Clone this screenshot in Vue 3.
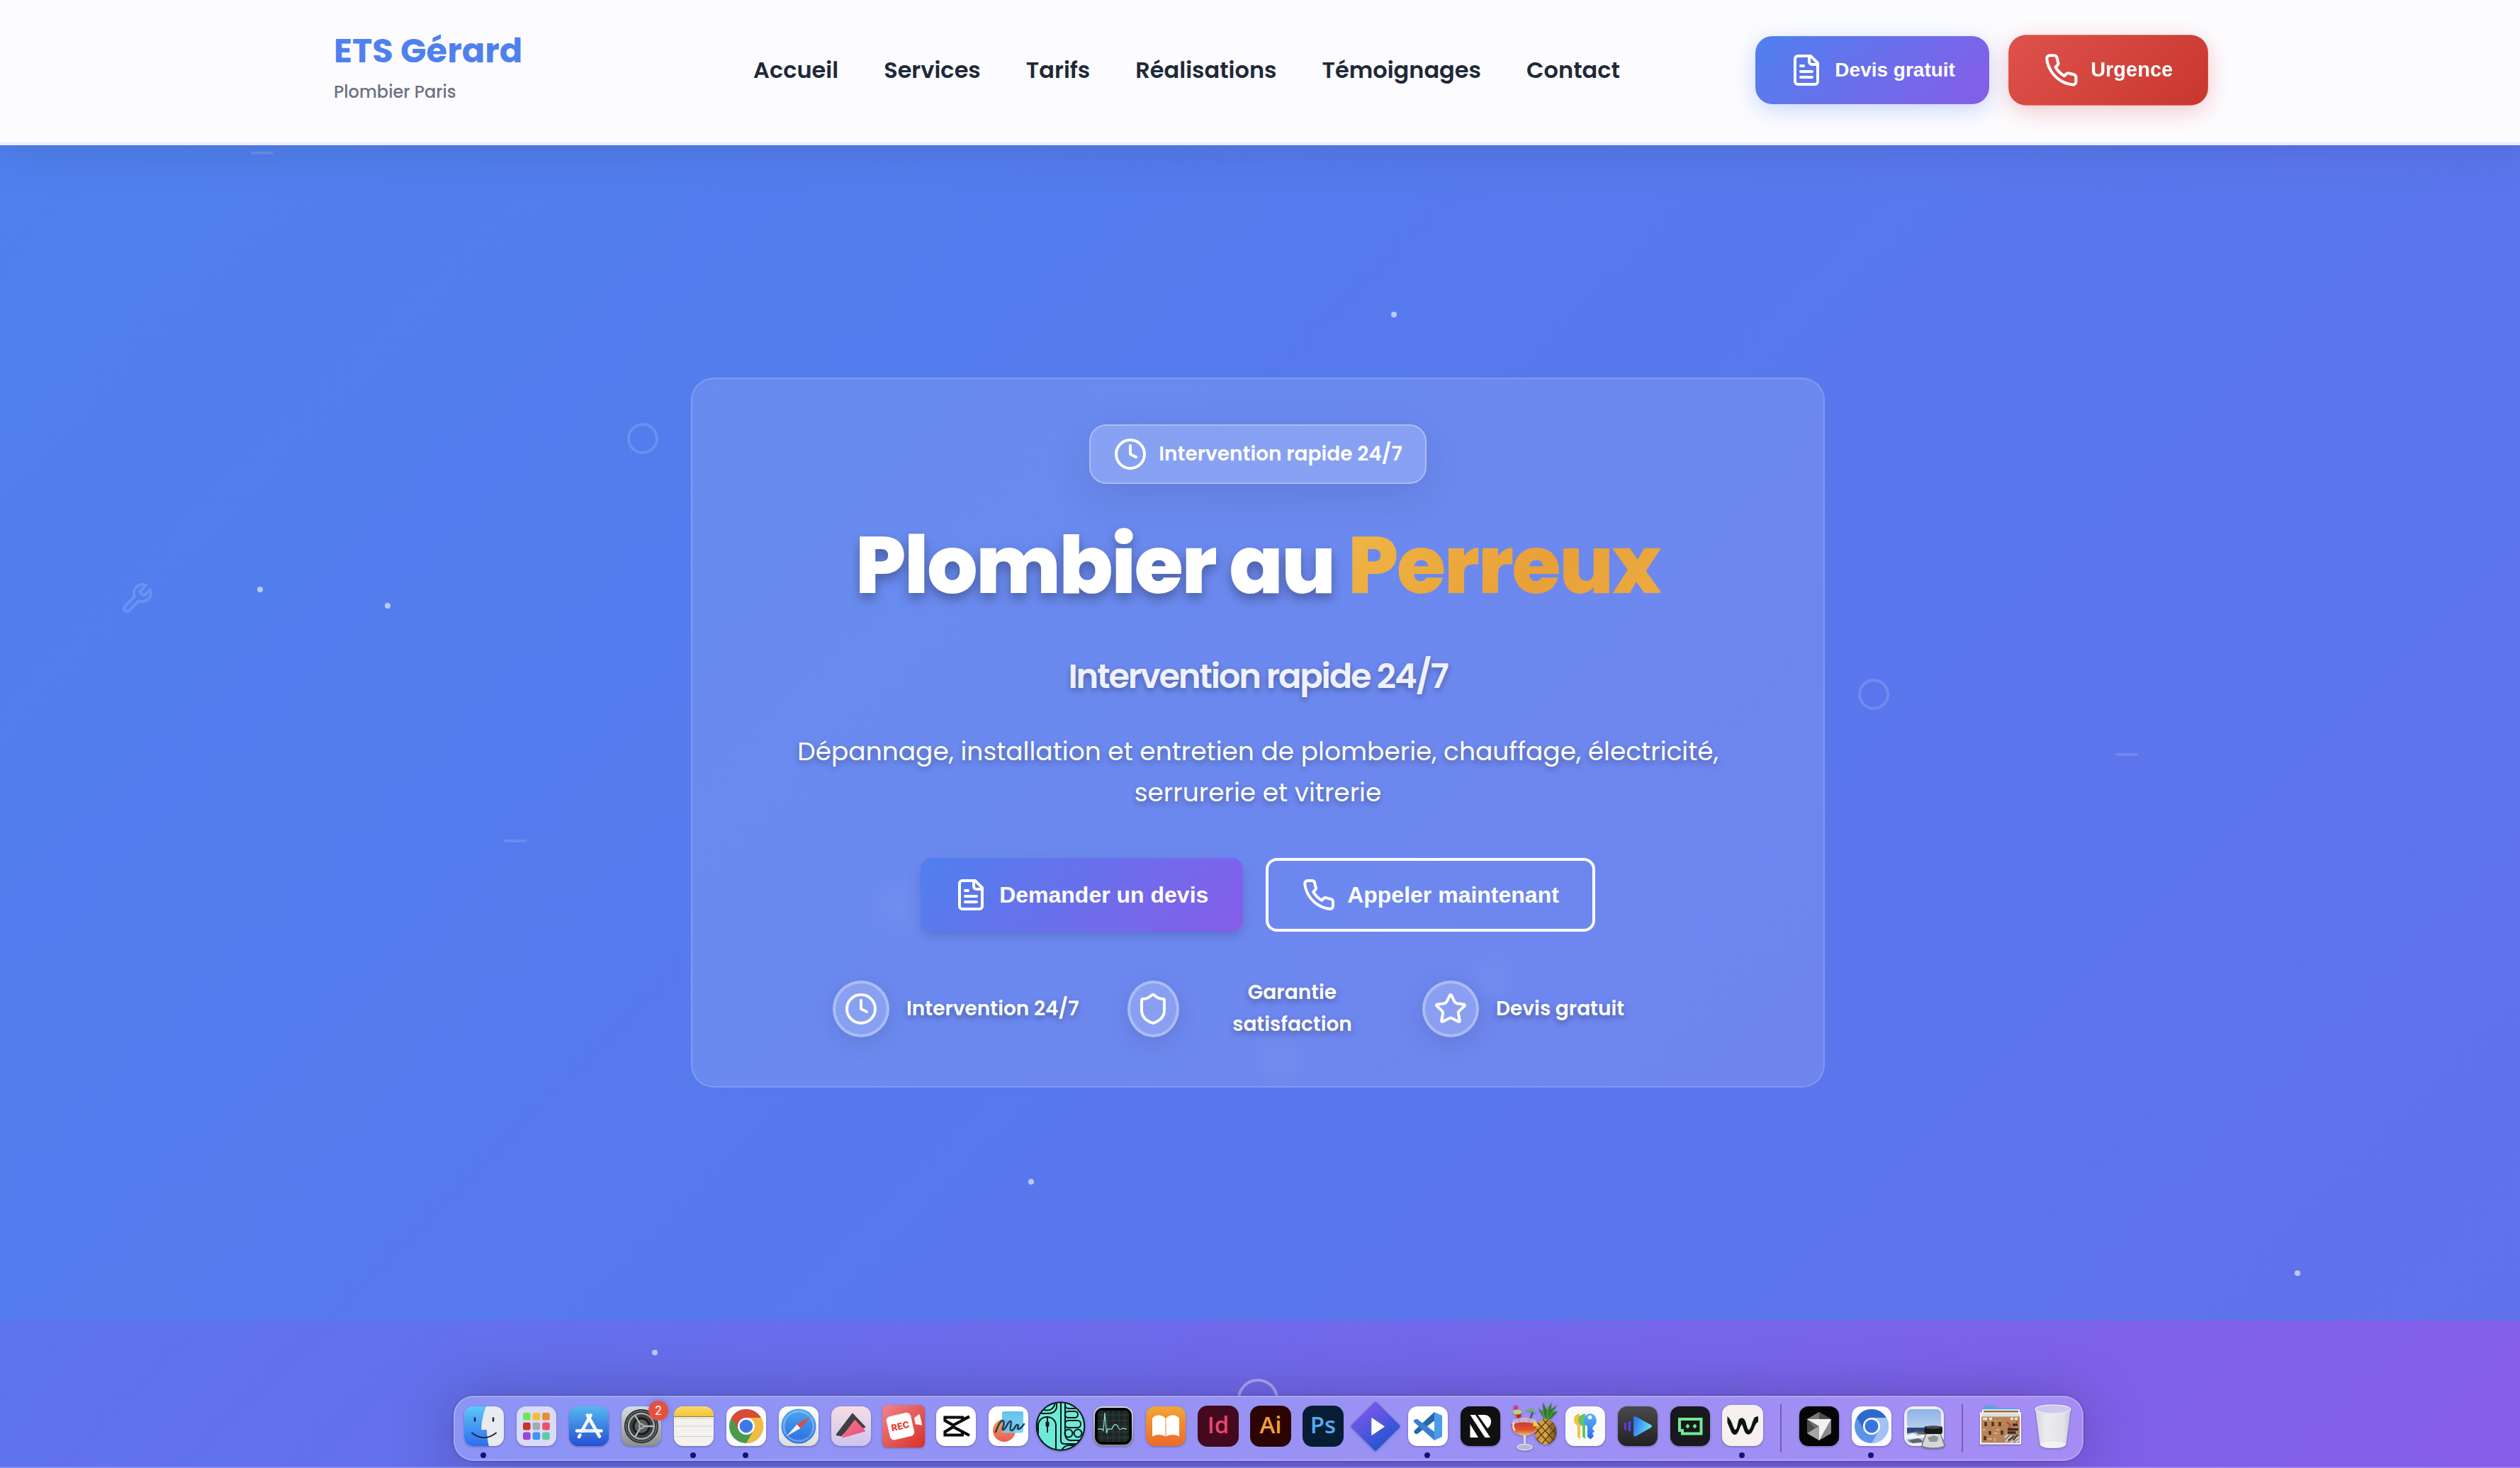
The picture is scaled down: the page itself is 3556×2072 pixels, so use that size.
<script setup>
const nav = ['Accueil', 'Services', 'Tarifs', 'Réalisations', 'Témoignages', 'Contact']

const icons = {
  file: ['M15 2H6a2 2 0 0 0-2 2v16a2 2 0 0 0 2 2h12a2 2 0 0 0 2-2V7Z', 'M14 2v4a2 2 0 0 0 2 2h4', 'M10 9H8', 'M16 13H8', 'M16 17H8'],
  phone: ['M22 16.92v3a2 2 0 0 1-2.18 2 19.79 19.79 0 0 1-8.63-3.07 19.5 19.5 0 0 1-6-6 19.79 19.79 0 0 1-3.07-8.67A2 2 0 0 1 4.11 2h3a2 2 0 0 1 2 1.72 12.84 12.84 0 0 0 .7 2.81 2 2 0 0 1-.45 2.11L8.09 9.91a16 16 0 0 0 6 6l1.27-1.27a2 2 0 0 1 2.11-.45 12.84 12.84 0 0 0 2.81.7A2 2 0 0 1 22 16.92z'],
  clock: ['M12 2a10 10 0 1 0 0 20a10 10 0 1 0 0-20', 'M12 6v6l4 2'],
  shield: ['M20 13c0 5-3.5 7.5-7.66 8.95a1 1 0 0 1-.67-.01C7.5 20.5 4 18 4 13V6a1 1 0 0 1 1-1c2 0 4.5-1.2 6.24-2.72a1.17 1.17 0 0 1 1.52 0C14.51 3.81 17 5 19 5a1 1 0 0 1 1 1z'],
  star: ['M11.525 2.295a.53.53 0 0 1 .95 0l2.31 4.679a2.123 2.123 0 0 0 1.595 1.16l5.166.756a.53.53 0 0 1 .294.904l-3.736 3.638a2.123 2.123 0 0 0-.611 1.878l.882 5.14a.53.53 0 0 1-.771.56l-4.618-2.428a2.122 2.122 0 0 0-1.973 0L6.396 21.01a.53.53 0 0 1-.77-.56l.881-5.139a2.122 2.122 0 0 0-.611-1.879L2.16 9.795a.53.53 0 0 1 .294-.906l5.165-.755a2.122 2.122 0 0 0 1.597-1.16z'],
  wrench: ['M14.7 6.3a1 1 0 0 0 0 1.4l1.6 1.6a1 1 0 0 0 1.4 0l3.77-3.77a6 6 0 0 1-7.94 7.94l-6.91 6.91a2.12 2.12 0 0 1-3-3l6.91-6.91a6 6 0 0 1 7.94-7.94l-3.76 3.76z']
}

const features = [
  { icon: 'clock', text: 'Intervention 24/7' },
  { icon: 'shield', text: 'Garantie satisfaction' },
  { icon: 'star', text: 'Devis gratuit' }
]

const particles = [[367, 832], [547, 855], [1967, 444], [1455, 1668], [3242, 1797], [924, 1909]]
const halos = [[1266, 1278], [2108, 1380], [1806, 1496]]
const rings = [[907, 619], [2644, 980]]
const dashes = [[370, 216], [3001, 1065], [727, 1187]]
const at = ([x, y]) => ({ left: x + 'px', top: y + 'px' })

const launchColors = ['#6fe552', '#f5bd38', '#ea8a33', '#cc3325', '#a3aab0', '#ee4f66', '#9a47d3', '#3f93f5', '#5fc9a6']
const ticks = Array.from({ length: 60 }, (_, i) => i * 6)
const gridLines = [10, 18, 26, 34, 42]
</script>

<template>
  <div class="page">
    <header class="header">
      <div class="logo">
        <span class="logo-name">ETS Gérard</span>
        <span class="logo-sub">Plombier Paris</span>
      </div>
      <nav class="nav">
        <a v-for="n in nav" :key="n">{{ n }}</a>
      </nav>
      <div class="actions">
        <button class="btn btn-quote">
          <svg class="ico" viewBox="0 0 24 24"><path v-for="d in icons.file" :key="d" :d="d" /></svg>
          <span>Devis gratuit</span>
        </button>
        <button class="btn btn-urgent">
          <svg class="ico" viewBox="0 0 24 24"><path v-for="d in icons.phone" :key="d" :d="d" /></svg>
          <span>Urgence</span>
        </button>
      </div>
    </header>

    <main class="hero">
      <section class="card">
        <div class="badge">
          <svg class="ico" viewBox="0 0 24 24"><path v-for="d in icons.clock" :key="d" :d="d" /></svg>
          <span>Intervention rapide 24/7</span>
        </div>
        <h1>Plombier au <span class="accent">Perreux</span></h1>
        <h2>Intervention rapide 24/7</h2>
        <p>Dépannage, installation et entretien de plomberie, chauffage, électricité, serrurerie et vitrerie</p>
        <div class="cta">
          <button class="cta-btn primary">
            <svg class="ico" viewBox="0 0 24 24"><path v-for="d in icons.file" :key="d" :d="d" /></svg>
            <span>Demander un devis</span>
          </button>
          <button class="cta-btn outline">
            <svg class="ico" viewBox="0 0 24 24"><path v-for="d in icons.phone" :key="d" :d="d" /></svg>
            <span>Appeler maintenant</span>
          </button>
        </div>
        <div class="features">
          <div v-for="f in features" :key="f.text" class="feature">
            <div class="disc">
              <svg class="ico" viewBox="0 0 24 24"><path v-for="d in icons[f.icon]" :key="d" :d="d" /></svg>
            </div>
            <span>{{ f.text }}</span>
          </div>
        </div>
      </section>
    </main>
    <div class="band"></div>

    <div class="decor">
      <i v-for="p in halos" :key="p[0]" class="halo" :style="at(p)"></i>
      <i v-for="p in particles" :key="p[0]" class="dot" :style="at(p)"></i>
      <i v-for="p in rings" :key="p[0]" class="ring" :style="at(p)"></i>
      <i v-for="p in dashes" :key="p[0]" class="dash" :style="at(p)"></i>
      <svg class="ico wrench" viewBox="0 0 24 24"><path :d="icons.wrench[0]" /></svg>
      <i class="scroll"></i>
    </div>

    <svg class="defs" width="0" height="0">
      <defs>
        <linearGradient id="gFinder" x2="0" y2="1"><stop offset="0" stop-color="#5cc8f8" /><stop offset="1" stop-color="#2f6cee" /></linearGradient>
        <linearGradient id="gStore" x2="0" y2="1"><stop offset="0" stop-color="#55b8f0" /><stop offset="1" stop-color="#2450d2" /></linearGradient>
        <linearGradient id="gGrey" x2="0" y2="1"><stop offset="0" stop-color="#d3dde4" /><stop offset="1" stop-color="#8d8d8b" /></linearGradient>
        <linearGradient id="gPaper" x2="0" y2="1"><stop offset="0" stop-color="#ffffff" /><stop offset="1" stop-color="#dededa" /></linearGradient>
        <linearGradient id="gNote" x2="0" y2="1"><stop offset="0" stop-color="#f9d96a" /><stop offset="1" stop-color="#f5c433" /></linearGradient>
        <linearGradient id="gSafari" x2="0" y2="1"><stop offset="0" stop-color="#4ba5f0" /><stop offset="1" stop-color="#2c6ee0" /></linearGradient>
        <linearGradient id="gPink" x2="0" y2="1"><stop offset="0" stop-color="#f6dde2" /><stop offset="1" stop-color="#cdc5ee" /></linearGradient>
        <linearGradient id="gTri" x2="1" y2="1"><stop offset="0" stop-color="#f07a72" /><stop offset="1" stop-color="#ee4a90" /></linearGradient>
        <linearGradient id="gRec" x2="1" y2="1"><stop offset="0" stop-color="#f0858a" /><stop offset="1" stop-color="#d92f25" /></linearGradient>
        <linearGradient id="gFree" x2="0" y2="1"><stop offset="0" stop-color="#f3a83c" /><stop offset="1" stop-color="#ea5a64" /></linearGradient>
        <linearGradient id="gFree2" x2="0" y2="1"><stop offset="0" stop-color="#4fb9ea" /><stop offset="1" stop-color="#74cdf5" /></linearGradient>
        <linearGradient id="gBook" x2="0" y2="1"><stop offset="0" stop-color="#f2a638" /><stop offset="1" stop-color="#ec6a2a" /></linearGradient>
        <linearGradient id="gDiamond" x2="0.6" y2="1"><stop offset="0" stop-color="#8b58ee" /><stop offset="1" stop-color="#2355d0" /></linearGradient>
        <linearGradient id="gPlay" x2="1" y2="0.3"><stop offset="0" stop-color="#2f74f0" /><stop offset="1" stop-color="#5fd8f2" /></linearGradient>
        <linearGradient id="gDark" x2="0" y2="1"><stop offset="0" stop-color="#4a4a4c" /><stop offset="1" stop-color="#222224" /></linearGradient>
        <linearGradient id="gKey" x2="0" y2="1"><stop offset="0" stop-color="#58b4f5" /><stop offset="1" stop-color="#2b6cf0" /></linearGradient>
        <linearGradient id="gPine" x2="1" y2="0"><stop offset="0" stop-color="#c58e38" /><stop offset=".5" stop-color="#d9a548" /><stop offset="1" stop-color="#6b4617" /></linearGradient>
        <linearGradient id="gDrink" x2="0" y2="1"><stop offset="0" stop-color="#c53a34" /><stop offset=".6" stop-color="#e2572c" /><stop offset="1" stop-color="#e9c06a" /></linearGradient>
        <linearGradient id="gSky" x2="0" y2="1"><stop offset="0" stop-color="#8db3ea" /><stop offset="1" stop-color="#b5cdee" /></linearGradient>
        <linearGradient id="gTrash" x2="1" y2="0"><stop offset="0" stop-color="#d4d5dc" /><stop offset=".3" stop-color="#ececee" /><stop offset=".8" stop-color="#e2e3e7" /><stop offset="1" stop-color="#c6c6d0" /></linearGradient>
        <clipPath id="tileClip"><rect width="56" height="56" rx="13" /></clipPath>
        <clipPath id="roundClip"><circle cx="27.500" cy="28" r="33" /></clipPath>
        <clipPath id="pineClip"><ellipse cx="46" cy="36" rx="15.500" ry="18" /></clipPath>
      </defs>
    </svg>

    <div class="dock">
      <!-- Finder -->
      <div class="app running">
        <svg viewBox="0 0 56 56">
          <g clip-path="url(#tileClip)">
            <rect width="56" height="56" fill="#e9ebf0" />
            <path d="M0 0H31C27 10 24.500 21 24 33H32C32 41 33 49 35 56H0Z" fill="url(#gFinder)" />
          </g>
          <path d="M15 16.500v4M41 16.500v4" stroke="#1d2a3c" stroke-width="2.600" stroke-linecap="round" />
          <path d="M11 37.500Q28 51 45 37.500" fill="none" stroke="#1a2434" stroke-width="2" stroke-linecap="round" />
        </svg>
      </div>
      <!-- Launchpad -->
      <div class="app">
        <svg viewBox="0 0 56 56">
          <rect width="56" height="56" rx="13" fill="#d9dcf8" />
          <rect v-for="(c, i) in launchColors" :key="c" :x="9 + (i % 3) * 13.600" :y="9 + Math.floor(i / 3) * 13.800" width="10.600" height="10.600" rx="2.600" :fill="c" />
        </svg>
      </div>
      <!-- App Store -->
      <div class="app">
        <svg viewBox="0 0 56 56">
          <rect width="56" height="56" rx="13" fill="url(#gStore)" />
          <path d="M30.500 12.500L18 35M26 12.500L43 42.500M11 34.500H23M32 34.500H45.500M15.500 40.500L14 43" stroke="#fff" stroke-width="4.600" stroke-linecap="round" fill="none" />
          <path d="M18 34.500H34" stroke="#e4eefc" stroke-width="4.600" />
        </svg>
      </div>
      <!-- System settings -->
      <div class="app">
        <svg viewBox="0 0 56 56">
          <rect width="56" height="56" rx="13" fill="url(#gGrey)" />
          <circle cx="28" cy="28" r="24" fill="#1f2122" />
          <circle cx="28" cy="28" r="21.500" fill="none" stroke="#9a9fa2" stroke-width="2" stroke-dasharray="1.300 1" />
          <circle cx="28" cy="28" r="18" fill="#3a3c3d" stroke="#a4a9ab" stroke-width="2.600" />
          <circle cx="28" cy="28" r="11" fill="#5c5f60" stroke="#1a1b1c" stroke-width="3" />
          <path d="M28 28H46M28 28L19 12.500M28 28L19 43.500" stroke="#b5babc" stroke-width="2.400" />
          <circle cx="28" cy="28" r="3.200" fill="#6f7375" stroke="#b5babc" stroke-width="1.400" />
        </svg>
        <span class="count">2</span>
      </div>
      <!-- Notes -->
      <div class="app running">
        <svg viewBox="0 0 56 56">
          <g clip-path="url(#tileClip)">
            <rect width="56" height="56" fill="#f3f2ef" />
            <rect width="56" height="14" fill="url(#gNote)" />
            <path d="M0 14.500H56" stroke="#8d7a3e" stroke-width="1" />
            <path d="M1 17H56" stroke="#c9c8c3" stroke-width="2" stroke-dasharray="1 1.500" />
            <path d="M0 28H56M0 42.500H56" stroke="#d3d2ce" stroke-width="1.200" />
          </g>
        </svg>
      </div>
      <!-- Chrome -->
      <div class="app running">
        <svg viewBox="0 0 56 56">
          <rect width="56" height="56" rx="13" fill="#fafaff" />
          <circle cx="28" cy="28" r="24" fill="#4a9a50" />
          <path d="M28 16H48.800A24 24 0 0 1 28 52L38.400 34Z" fill="#f2bb42" />
          <path d="M7.200 16A24 24 0 0 1 48.800 16H28A12 12 0 0 0 17.600 34Z" fill="#d64b38" />
          <circle cx="28" cy="28" r="12" fill="#fff" />
          <circle cx="28" cy="28" r="9.300" fill="#3f78e6" />
        </svg>
      </div>
      <!-- Safari -->
      <div class="app">
        <svg viewBox="0 0 56 56">
          <rect width="56" height="56" rx="13" fill="url(#gPaper)" />
          <circle cx="28" cy="28" r="24.500" fill="url(#gSafari)" />
          <path v-for="a in ticks" :key="a" d="M28 5.500v3" stroke="#cfe4fb" stroke-width=".8" :transform="`rotate(${a} 28 28)`" />
          <path d="M45 14L30.500 31L25.500 25.500Z" fill="#e4493c" />
          <path d="M11 42L25.500 25.500L30.500 31Z" fill="#f5f6f8" />
        </svg>
      </div>
      <!-- Triangle -->
      <div class="app">
        <svg viewBox="0 0 56 56">
          <rect width="56" height="56" rx="13" fill="url(#gPink)" />
          <path d="M30 11L47 29L41 31L33 20L14 41L8 40Z" fill="#3f3f44" stroke="#3f3f44" stroke-width="2.500" stroke-linejoin="round" />
          <path d="M33.500 20.500L46.500 34.500L16.500 43Z" fill="url(#gTri)" stroke="url(#gTri)" stroke-width="2.500" stroke-linejoin="round" />
        </svg>
      </div>
      <!-- Recorder -->
      <div class="app">
        <svg viewBox="0 0 56 56">
          <rect x="-2" y="-2" width="60" height="60" rx="7" fill="url(#gRec)" />
          <g transform="rotate(-13 24 28)">
            <rect x="6" y="11" width="35" height="34" rx="6" fill="#fff" />
            <text x="23.500" y="32.500" text-anchor="middle" class="rec">REC</text>
            <path d="M45 21L52 17.500Q54 17 54 19V32Q54 34 52 33L45 30Z" fill="#f8f0f0" />
          </g>
        </svg>
      </div>
      <!-- Video cutter -->
      <div class="app">
        <svg viewBox="0 0 56 56">
          <rect width="56" height="56" rx="13" fill="#fff" />
          <path d="M47 14.500L24 26.500L12.500 20V15.500H37V19L47 14.500M47 41L24 29L12.500 36V40.500H37V36.500" fill="none" stroke="#0a0a0a" stroke-width="4.200" />
        </svg>
      </div>
      <!-- Freeform -->
      <div class="app">
        <svg viewBox="0 0 56 56">
          <rect width="56" height="56" rx="13" fill="#fff" />
          <circle cx="22" cy="34" r="16" fill="url(#gFree)" />
          <rect x="19" y="7" width="30" height="30.500" rx="3" fill="url(#gFree2)" opacity=".88" />
          <path d="M10 36C14 25 18 18 21 21C24 24 17 34 21 33C25 32 27 20 31 21C34 22 28 33 32 34C37 35 37 25 41 26C44 27 38 33 43 32C46 31 47 29 50 25" fill="none" stroke="#1d4060" stroke-width="2.600" stroke-linecap="round" />
        </svg>
      </div>
      <!-- Steer mouse -->
      <div class="app">
        <svg viewBox="0 0 56 56">
          <circle cx="27.500" cy="28" r="34" fill="#6debd8" />
          <g clip-path="url(#roundClip)" fill="none" stroke="#0b1413" stroke-width="2">
            <path d="M28 -8V48Q28 53 33 53H62" /><path d="M34 -8V38Q34 48 42 48H62" />
            <rect x="-4" y="15" width="25" height="60" rx="12" />
            <path d="M9 15V37M22 -6V2Q20 10 10 10H-4M4 5Q18 8 20 -6" />
            <rect x="7.500" y="22" width="3" height="6" rx="1.500" fill="#0b1413" />
            <rect x="34" y="-8" width="18" height="11" rx="5" /><rect x="34" y="7" width="18" height="9" rx="4.500" />
            <rect x="34" y="20" width="22" height="10" rx="4.500" />
            <circle cx="39" cy="38" r="5.500" /><circle cx="52" cy="38" r="5.500" />
            <path d="M28 64Q32 55 40 55H56" />
          </g>
          <circle cx="27.500" cy="28" r="33.800" fill="none" stroke="#0b1413" stroke-width="2" />
        </svg>
      </div>
      <!-- Activity monitor -->
      <div class="app">
        <svg viewBox="0 0 56 56">
          <rect width="56" height="56" rx="13" fill="url(#gGrey)" />
          <rect x="2" y="2" width="52" height="52" rx="11" fill="#050606" />
          <rect x="6" y="6" width="44" height="44" rx="5" fill="#1c2624" />
          <g stroke="#3c4d49" stroke-width=".7"><path v-for="g in gridLines" :key="g" :d="`M${g + 2} 6V50M6 ${g + 2}H50`" /></g>
          <path d="M6 32H12L14 34L16 9L18.500 38L20 32H26C29 24 33 24 35 30C37 34 39 32 41 31L47 32" fill="none" stroke="#8cd9c4" stroke-width="1.300" />
        </svg>
      </div>
      <!-- Books -->
      <div class="app">
        <svg viewBox="0 0 56 56">
          <rect width="56" height="56" rx="13" fill="url(#gBook)" />
          <path d="M27.500 17C23 11 13 11 9 17V42.500C14 39 23 39 27.500 42.500ZM28.500 17C33 11 43 11 47 17V42.500C42 39 33 39 28.500 42.500Z" fill="#fff" />
        </svg>
      </div>
      <!-- Adobe suite -->
      <div class="app adobe id"><span>Id</span></div>
      <div class="app adobe ai"><span>Ai</span></div>
      <div class="app adobe ps"><span>Ps</span></div>
      <!-- Diamond player -->
      <div class="app">
        <svg viewBox="0 0 56 56">
          <path d="M28 -4L60 28L28 60L-4 28Z" fill="url(#gDiamond)" stroke="url(#gDiamond)" stroke-width="5" stroke-linejoin="round" />
          <path d="M23 17L40 28.500L23 40Z" fill="#fff" stroke="#fff" stroke-width="1.500" stroke-linejoin="round" />
        </svg>
      </div>
      <!-- VS Code -->
      <div class="app running">
        <svg viewBox="0 0 56 56">
          <rect width="56" height="56" rx="13" fill="#fff" />
          <path d="M37 8L9 34Q7 37 11 39L13 39L40 18Z" fill="#2866ad" />
          <path d="M37 48L8 22Q7 19 11 18H13L40 38Z" fill="#3a80cc" />
          <path d="M37 8L48 13V43L37 48Z" fill="#4a9ceb" />
        </svg>
      </div>
      <!-- Notchy -->
      <div class="app">
        <svg viewBox="0 0 56 56">
          <rect width="56" height="56" rx="13" fill="#101010" />
          <path d="M13.500 12H21L42 44H34.500ZM13.500 25L25 44H13.500ZM24.500 12H33C45 12 46 26 38 31Z" fill="#fff" />
        </svg>
      </div>
      <!-- Cocktail and pineapple -->
      <div class="app">
        <svg viewBox="0 0 56 56">
          <path d="M46 20L35 2L43 9L42 -6L48 6L55 -6L53 5L62 -2L56 8L63 7L54 17Z" fill="#2f7a2a" />
          <path d="M46 19L41 6M48 19L50 0M50 18L58 4" stroke="#4fa83f" stroke-width="1.500" />
          <ellipse cx="46" cy="36" rx="15.500" ry="18" fill="url(#gPine)" />
          <path clip-path="url(#pineClip)" d="M26 24L54 56M30 18L60 50M38 14L66 44M22 34L46 60M66 24L38 56M62 18L30 50M54 14L26 44M70 34L44 60" stroke="#5b3d12" stroke-width="1.400" />
          <path d="M3 2L12 30M28 8L20 28" stroke="#4a2a66" stroke-width="1.600" />
          <circle cx="4" cy="1.500" r="3" fill="#d8329a" /><circle cx="8" cy="13" r="3.400" fill="#b92a22" />
          <ellipse cx="6" cy="8" rx="6.500" ry="3.500" fill="#c9cf6c" />
          <path d="M18 7Q26 -2 33 11Q25 5 18 7Z" fill="#56c83a" />
          <path d="M0 19Q-6 34 6 39Q16 44 27 39Q38 32 32 19Q16 12 0 19Z" fill="#e7c0cf" opacity=".75" />
          <path d="M-2 25Q-3 36 7 39Q16 43 26 39Q35 33 33 25Q16 20 -2 25Z" fill="url(#gDrink)" />
          <path d="M1 23Q-1 30 3 34" fill="none" stroke="#fff" stroke-width="2.500" opacity=".8" />
          <path d="M14.500 41H18.500L18 55H15Z" fill="#d5d5ea" />
          <ellipse cx="16.500" cy="57.500" rx="10.500" ry="4.200" fill="#b9b9d2" stroke="#e9e9f6" stroke-width="1.200" />
          <path d="M30 20L37 28H28Z" fill="#f0d23c" />
        </svg>
      </div>
      <!-- Passwords -->
      <div class="app">
        <svg viewBox="0 0 56 56">
          <rect width="56" height="56" rx="13" fill="#fafafa" />
          <path d="M20 10Q11 12 12 20Q12 25 17 27V43L21 46V26Z" fill="#f2c343" />
          <path d="M28 10Q18 12 18 20Q18 25 24 28V43L28 46V30Z" fill="#62c46a" />
          <path d="M34.500 10A10 10 0 0 1 39 28.500L38 32L41 35L38 38L40 42L35.500 46.500L31 43V28.500A10 10 0 0 1 34.500 10Z" fill="url(#gKey)" />
          <circle cx="34.500" cy="15.500" r="2.800" fill="#fff" />
        </svg>
      </div>
      <!-- Player -->
      <div class="app">
        <svg viewBox="0 0 56 56">
          <rect width="56" height="56" rx="13" fill="url(#gDark)" />
          <path d="M10.500 24v8" stroke="#6a33e0" stroke-width="3" stroke-linecap="round" />
          <path d="M16.500 22.500v11" stroke="#4a44f0" stroke-width="3.600" stroke-linecap="round" />
          <path d="M24 16L46 28L24 40.500Z" fill="url(#gPlay)" stroke="url(#gPlay)" stroke-width="4" stroke-linejoin="round" />
        </svg>
      </div>
      <!-- Pixel bot -->
      <div class="app">
        <svg viewBox="0 0 56 56">
          <rect width="56" height="56" rx="13" fill="#17191c" />
          <path d="M13 18H43.500V38.500H17V34H13Z" fill="none" stroke="#72e994" stroke-width="4" />
          <path d="M24.500 24.500L27.500 28L24.500 31.500L21.500 28ZM34.500 24.500L37.500 28L34.500 31.500L31.500 28Z" fill="#72e994" />
        </svg>
      </div>
      <!-- W -->
      <div class="app running">
        <svg viewBox="0 0 56 56">
          <rect x="-1" y="-2" width="58" height="58" rx="13" fill="#f6f1ec" />
          <path d="M6.500 14C11 18 12 21 15 29C17 34 18 34 20 30C22 22 22 17 25 17Q28 15 31 19C34 25 35 37 38 32C42 26 42 17 46 15L50 14V22C46 23 45 30 42 35C39 41 34 41 31 36L27 25C24 29 23 35 20 39C17 41 14 40 12 36L6.500 23Z" fill="#0e1412" />
        </svg>
      </div>
      <i class="sep"></i>
      <!-- Cube -->
      <div class="app">
        <svg viewBox="0 0 56 56">
          <rect width="56" height="56" rx="13" fill="#050505" />
          <path d="M28 8L45 18V38L28 48L11 38V18Z" fill="#6e6e6e" />
          <path d="M11 18L28 8V18Z" fill="#777" /><path d="M28 8L45 18H28Z" fill="#4a4a4a" />
          <path d="M11 38L28 28V48Z" fill="#a5a5a5" /><path d="M11 18V38L22 31Z" fill="#4d4d4d" />
          <path d="M45 18L28 48L45 38Z" fill="#8a8a8a" />
          <path d="M11 18H45L28 48V28Z" fill="#f2f2f2" />
        </svg>
      </div>
      <!-- Chromium -->
      <div class="app running">
        <svg viewBox="0 0 56 56">
          <rect width="56" height="56" rx="13" fill="#fafaff" />
          <circle cx="28" cy="28" r="24" fill="#5b93e8" />
          <path d="M28 16H48.800A24 24 0 0 1 28 52L38.400 34Z" fill="#a3c2f4" />
          <path d="M7.200 16A24 24 0 0 1 48.800 16H28A12 12 0 0 0 17.600 34Z" fill="#3069cd" />
          <circle cx="28" cy="28" r="12" fill="#fff" />
          <circle cx="28" cy="28" r="9.500" fill="#3a74e0" />
        </svg>
      </div>
      <!-- Preview -->
      <div class="app">
        <svg viewBox="0 0 56 56">
          <rect width="56" height="56" rx="13" fill="#efeff0" />
          <rect x="4" y="4" width="48" height="27" rx="6" fill="url(#gSky)" />
          <rect x="4" y="30" width="48" height="22" rx="5" fill="#a9c2dc" />
          <path d="M4 30H52V36L40 38L20 36L4 38Z" fill="#2b4a80" />
          <path d="M4 41L12 38L20 42L30 38L34 44L4 46Z" fill="#f1f4f8" />
          <path d="M14 35L28 36L30 40L20 39Z" fill="#6d5d55" />
          <path d="M6 48L20 45L28 50L12 52Z" fill="#5d666e" />
          <path d="M31 38H51L57 55Q56 59 41 59Q26 59 25 55Z" fill="#d4d6da" stroke="#77787c" stroke-width="1.400" />
          <path d="M33 44L42 41L49 44L46 50L36 50Z" fill="#75797f" opacity=".7" />
          <rect x="28.500" y="28" width="25.500" height="11" rx="3" fill="#17181a" />
          <ellipse cx="41.200" cy="29.500" rx="11.500" ry="2.200" fill="#4a4b4e" />
        </svg>
      </div>
      <i class="sep"></i>
      <!-- Pictures folder -->
      <div class="app">
        <svg viewBox="0 0 56 56">
          <path d="M5 6V2Q5 -1 8 -1H18L23 3H50V8H5Z" fill="#5ba3dc" />
          <rect x="2" y="4.500" width="53" height="10" fill="#fff" /><rect x="4" y="6" width="49" height="3" fill="#85693f" />
          <rect x="-1" y="8.500" width="58" height="45" fill="#fff" />
          <rect x="1" y="10.500" width="54" height="41" fill="#b9835a" />
          <rect x="1" y="10.500" width="54" height="4" fill="#dfe0dc" />
          <path d="M7 22V28M17 22V28M27 22V28M6 42V48M13 35V40M30 34V40" stroke="#4b3322" stroke-width="3.600" />
          <path d="M3 17.500H9M12 17.500H16M42 17.500H46M48 17.500H52" stroke="#ece7dd" stroke-width="3.500" />
          <path d="M3 33H7M10 46H16M20 44V49M22 33H26M19 38H24" stroke="#d9b48e" stroke-width="1.800" />
          <path d="M38 32.500H53M38 37H50M45 26H52" stroke="#3a2628" stroke-width="3.600" />
          <path d="M35 50L44 41M42 51L54 43M50 51L55 47M34 44L38 40" stroke="#c3d6e2" stroke-width="2.400" />
          <path d="M39 48L47 42M46 48L52 40" stroke="#26323a" stroke-width="2" />
          <path d="M37 22L42 27M39 29.500H43M51 21V25" stroke="#b3403c" stroke-width="1.800" />
          <path d="M7 20H28M50 29V38" stroke="#dcc23e" stroke-width="1.500" stroke-dasharray="1.500 5" />
        </svg>
      </div>
      <!-- Trash -->
      <div class="app">
        <svg viewBox="0 0 56 56">
          <path d="M3 4L9.500 53Q10 59 28 59Q46 59 46.500 53L53 4Z" fill="url(#gTrash)" />
          <ellipse cx="28" cy="4" rx="25" ry="6" fill="#cfc8ee" stroke="#e9e6f8" stroke-width="1.400" />
          <path d="M10 52Q28 47 46 52Q46 58 28 58Q10 58 10 52Z" fill="#fff" opacity=".45" />
        </svg>
      </div>
    </div>
    <div class="edge"></div>
  </div>
</template>

<style>
body { margin: 0; background: #5577ec; }
</style>

<style scoped>
.page { position: relative; width: 3556px; height: 2072px; overflow: hidden; display: flex; flex-direction: column; font-family: 'Poppins', 'Inter', sans-serif; }
.ico { width: 48px; height: 48px; flex: none; fill: none; stroke: currentColor; stroke-width: 2; stroke-linecap: round; stroke-linejoin: round; }

.header { position: relative; z-index: 2; box-sizing: border-box; flex: none; height: 205px; padding: 0 445px 4px 471px; display: flex; align-items: center; background: #fcfcff; border-bottom: 4px solid #e8effc; box-shadow: 0 8px 64px rgba(0, 0, 0, .1); }
.logo { align-self: flex-start; width: 267px; padding-top: 43px; display: flex; flex-direction: column; gap: 11px; }
.logo-name { font-weight: 700; font-size: 48px; line-height: 58px; color: #4f80ee; }
.logo-sub { font-weight: 500; font-size: 24px; line-height: 36px; color: #6c727f; }
.nav { margin-left: 325px; display: flex; gap: 64px; font-weight: 600; font-size: 32px; line-height: 48px; color: #202938; }
.actions { margin-left: auto; display: flex; gap: 32px; }
button { margin: 0; border: 0; cursor: pointer; }
.btn { display: flex; align-items: center; gap: 16px; height: 96px; padding: 0 48px; border-radius: 24px; color: #fff; font: 700 28px 'Liberation Sans', Arial, sans-serif; white-space: nowrap; }
.btn-quote { background: linear-gradient(135deg, #4f80ee, #865de9); box-shadow: 0 8px 32px rgba(79, 128, 238, .3); }
.btn-urgent { background: linear-gradient(135deg, #de524c, #c8372e); box-shadow: 0 8px 32px rgba(222, 82, 76, .3); transform: scale(1.036); }

.hero { flex: none; height: 1659px; box-sizing: border-box; padding: 328px 6px 0 0; display: flex; justify-content: center; align-items: flex-start; background: linear-gradient(135deg, #4f80ee, #6071ec); }
.band { flex: 1; background: linear-gradient(135deg, #5c74ec, #865de9); }

.card { position: relative; z-index: 1; box-sizing: border-box; width: 1600px; height: 1002px; padding: 64px; display: flex; flex-direction: column; align-items: center; border: 2px solid rgba(255, 255, 255, .15); border-radius: 32px; background: rgba(255, 255, 255, .12); color: #fff; text-align: center; }
.badge { box-sizing: border-box; height: 84px; padding: 0 32px; display: flex; align-items: center; gap: 16px; border: 2px solid rgba(255, 255, 255, .3); border-radius: 24px; background: rgba(255, 255, 255, .2); box-shadow: 0 16px 64px rgba(0, 0, 0, .1); font-weight: 600; font-size: 28px; line-height: 44.8px; }
h1 { margin: 48px 0 0; font-weight: 800; font-size: 112px; line-height: 134.4px; letter-spacing: -2.24px; text-shadow: 0 8px 16px rgba(0, 0, 0, .3); }
.accent { background: linear-gradient(135deg, #f0b845, #e8a038 60%, #ecac40); -webkit-background-clip: text; background-clip: text; color: transparent; text-shadow: none; }
h2 { margin: 61px 0 0; font-weight: 600; font-size: 48px; line-height: 57.6px; letter-spacing: -2.24px; color: #eff1fe; text-shadow: 0 4px 8px rgba(0, 0, 0, .3); }
p { margin: 48px 0 0; width: 1400px; font-weight: 400; font-size: 36px; line-height: 57.6px; text-shadow: 0 4px 8px rgba(0, 0, 0, .3); }
.cta { margin-top: 64px; display: flex; gap: 32px; }
.cta-btn { box-sizing: border-box; height: 104px; display: flex; align-items: center; gap: 16px; padding: 0 47px; border-radius: 16px; color: #fff; font: 700 32px 'Liberation Sans', Arial, sans-serif; white-space: nowrap; }
.primary { width: 455px; background: linear-gradient(135deg, #4f80ee, #865de9); box-shadow: 0 8px 12px -2px rgba(0, 0, 0, .1), 0 4px 24px rgba(0, 0, 0, .06); }
.outline { border: 4px solid #fff; background: transparent; }
.features { width: 1200px; margin-top: 64px; display: grid; grid-template-columns: repeat(3, minmax(0, 1fr)); gap: 48px; }
.feature { display: flex; align-items: center; gap: 24px; font-weight: 600; font-size: 28px; line-height: 44.8px; text-shadow: 0 4px 8px rgba(0, 0, 0, .3); }
.disc { box-sizing: border-box; width: 80px; min-width: 0; height: 80px; display: flex; align-items: center; justify-content: center; border: 4px solid rgba(255, 255, 255, .3); border-radius: 50%; background: rgba(255, 255, 255, .2); box-shadow: 0 8px 32px rgba(0, 0, 0, .1); }

.decor { position: absolute; inset: 0; overflow: hidden; color: #fff; }
.decor > * { position: absolute; box-sizing: border-box; transform: translate(-50%, -50%); }
.halo { width: 90px; height: 90px; border-radius: 50%; background: radial-gradient(closest-side, rgba(255, 255, 255, .045), transparent); }
.dot { width: 8px; height: 8px; border-radius: 50%; background: rgba(255, 255, 255, .6); }
.ring { width: 44px; height: 44px; border: 4px solid rgba(255, 255, 255, .15); border-radius: 50%; }
.dash { width: 32px; height: 4px; border-radius: 2px; background: rgba(255, 255, 255, .13); }
.wrench { left: 193px; top: 845px; opacity: .15; }
.scroll { left: 1775px; top: 1975px; width: 58px; height: 58px; border: 4px solid rgba(255, 255, 255, .4); border-radius: 50%; }

.defs { position: absolute; }
.dock { position: absolute; z-index: 3; left: 640px; top: 1970px; box-sizing: border-box; width: 2300px; height: 92px; padding: 15px 15px 0; display: flex; gap: 18px; border-radius: 28px; background: linear-gradient(90deg, #8c94f6, #9892f4 50%, #a58cf5); box-shadow: inset 0 0 0 2px rgba(255, 255, 255, .2), 0 0 3px rgba(0, 0, 0, .4), 0 8px 90px rgba(0, 0, 0, .26); }
.app { position: relative; flex: none; width: 56px; height: 56px; }
.app svg { display: block; width: 56px; height: 56px; overflow: visible; filter: drop-shadow(0 1px 1.500px rgba(0, 0, 0, .3)); }
.running::after { content: ''; position: absolute; left: 23px; top: 65px; width: 8px; height: 8px; border-radius: 50%; background: #17107a; }
.sep { flex: none; width: 16px; height: 68px; margin-top: -3px; background: linear-gradient(#7060c4, #7060c4) center / 2px 100% no-repeat; }
.count { position: absolute; left: 38px; top: -8px; width: 28px; height: 28px; border-radius: 50%; background: #e5503f; box-shadow: 0 0 10px rgba(0, 0, 0, .2); color: #fff; font: 400 17px/28px 'Inter', sans-serif; text-align: center; }
.rec { font: 800 13px 'Inter', sans-serif; fill: #e2402f; }
.adobe { width: 58px; height: 58px; margin: -1px; border-radius: 14px; display: flex; align-items: center; justify-content: center; font: 600 33px/54px 'Open Sans', sans-serif; }
.adobe span { margin-top: -4px; }
.id { background: #43091f; color: #e8486c; }
.ai { background: #2c0503; color: #f0a03c; }
.ps { background: #071d33; color: #57a8f5; }
.edge { position: absolute; z-index: 3; left: 0; right: 0; bottom: 0; height: 2px; background: rgba(255, 255, 255, .18); }
</style>
